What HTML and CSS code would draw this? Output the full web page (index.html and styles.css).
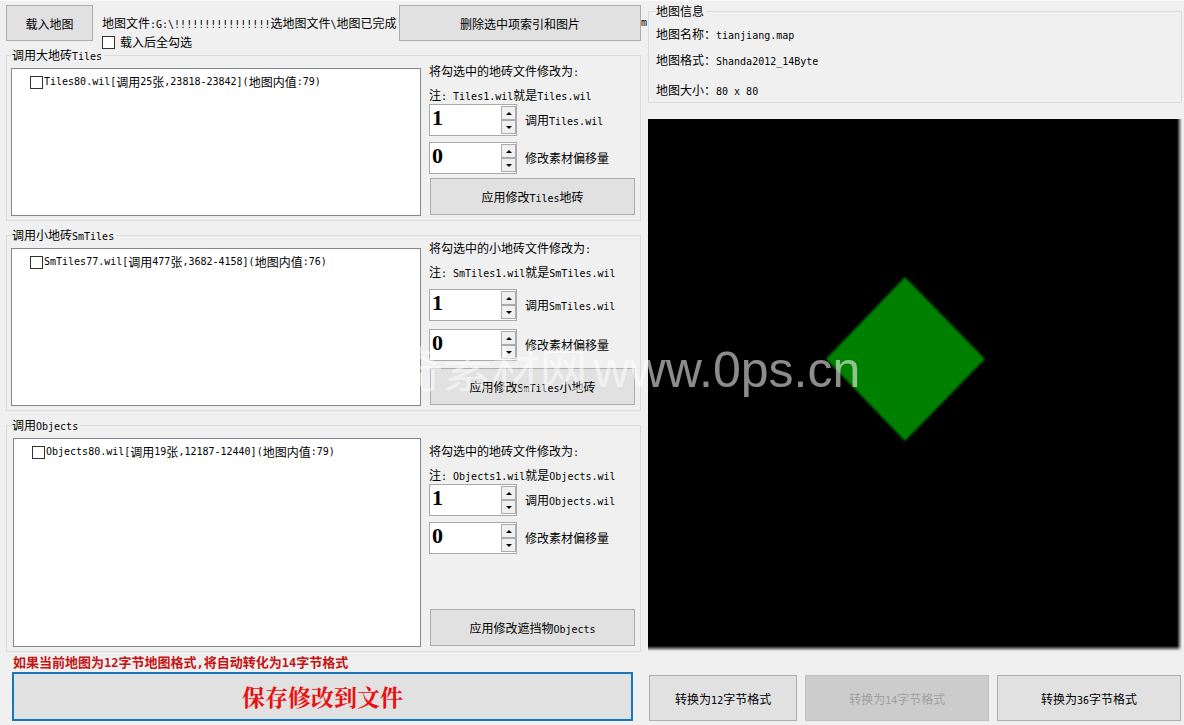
FILE: index.html
```html
<!DOCTYPE html>
<html lang="zh-CN">
<head>
    <meta charset="UTF-8">
    <meta name="viewport" content="width=device-width, initial-scale=1.0">
    <title>地图索引修改工具</title>
    <link rel="stylesheet" href="styles.css">
</head>
<body>
    <div class="window">
        <div class="left">
            <div class="toolbar">
                <button type="button" class="btn btn-load">载入地图</button>
                <div class="toolbar-text">
                    <p class="file-path">地图文件<span class="en">:G:\!!!!!!!!!!!!!!!!</span>选地图文件<span class="en">\</span>地图已完成<span class="en">'</span></p>
                    <label class="check"><input type="checkbox">载入后全勾选</label>
                </div>
                <button type="button" class="btn btn-delete">删除选中项索引和图片</button>
                <span class="path-end en">m</span>
            </div>

            <fieldset class="group">
                <legend>调用大地砖<span class="en">Tiles</span></legend>
                <div class="group-body tiles">
                    <div class="list">
                        <label class="list-item"><input type="checkbox"><span class="en">Tiles80.wil[</span>调用<span class="en">25</span>张<span class="en">,23818-23842](</span>地图内值<span class="en">:79)</span></label>
                    </div>
                    <div class="controls">
                        <p>将勾选中的地砖文件修改为<span class="en">:</span></p>
                        <p>注<span class="en">: Tiles1.wil</span>就是<span class="en">Tiles.wil</span></p>
                        <div class="row">
                            <div class="spin">
                                <input type="text" id="tiles-file" value="1">
                                <div class="spin-btns"><button type="button" aria-label="加"></button><button type="button" aria-label="减" class="down"></button></div>
                            </div>
                            <label for="tiles-file">调用<span class="en">Tiles.wil</span></label>
                        </div>
                        <div class="row">
                            <div class="spin">
                                <input type="text" id="tiles-offset" value="0">
                                <div class="spin-btns"><button type="button" aria-label="加"></button><button type="button" aria-label="减" class="down"></button></div>
                            </div>
                            <label for="tiles-offset">修改素材偏移量</label>
                        </div>
                        <button type="button" class="btn btn-apply">应用修改<span class="en">Tiles</span>地砖</button>
                    </div>
                </div>
            </fieldset>

            <fieldset class="group">
                <legend>调用小地砖<span class="en">SmTiles</span></legend>
                <div class="group-body smtiles">
                    <div class="list">
                        <label class="list-item"><input type="checkbox"><span class="en">SmTiles77.wil[</span>调用<span class="en">477</span>张<span class="en">,3682-4158](</span>地图内值<span class="en">:76)</span></label>
                    </div>
                    <div class="controls">
                        <p>将勾选中的小地砖文件修改为<span class="en">:</span></p>
                        <p>注<span class="en">: SmTiles1.wil</span>就是<span class="en">SmTiles.wil</span></p>
                        <div class="row">
                            <div class="spin">
                                <input type="text" id="smtiles-file" value="1">
                                <div class="spin-btns"><button type="button" aria-label="加"></button><button type="button" aria-label="减" class="down"></button></div>
                            </div>
                            <label for="smtiles-file">调用<span class="en">SmTiles.wil</span></label>
                        </div>
                        <div class="row">
                            <div class="spin">
                                <input type="text" id="smtiles-offset" value="0">
                                <div class="spin-btns"><button type="button" aria-label="加"></button><button type="button" aria-label="减" class="down"></button></div>
                            </div>
                            <label for="smtiles-offset">修改素材偏移量</label>
                        </div>
                        <button type="button" class="btn btn-apply">应用修改<span class="en">SmTiles</span>小地砖</button>
                    </div>
                </div>
            </fieldset>

            <fieldset class="group">
                <legend>调用<span class="en">Objects</span></legend>
                <div class="group-body objects">
                    <div class="list">
                        <label class="list-item"><input type="checkbox"><span class="en">Objects80.wil[</span>调用<span class="en">19</span>张<span class="en">,12187-12440](</span>地图内值<span class="en">:79)</span></label>
                    </div>
                    <div class="controls">
                        <p>将勾选中的地砖文件修改为<span class="en">:</span></p>
                        <p>注<span class="en">: Objects1.wil</span>就是<span class="en">Objects.wil</span></p>
                        <div class="row">
                            <div class="spin">
                                <input type="text" id="objects-file" value="1">
                                <div class="spin-btns"><button type="button" aria-label="加"></button><button type="button" aria-label="减" class="down"></button></div>
                            </div>
                            <label for="objects-file">调用<span class="en">Objects.wil</span></label>
                        </div>
                        <div class="row">
                            <div class="spin">
                                <input type="text" id="objects-offset" value="0">
                                <div class="spin-btns"><button type="button" aria-label="加"></button><button type="button" aria-label="减" class="down"></button></div>
                            </div>
                            <label for="objects-offset">修改素材偏移量</label>
                        </div>
                        <button type="button" class="btn btn-apply">应用修改遮挡物<span class="en">Objects</span></button>
                    </div>
                </div>
            </fieldset>

            <p class="warning">如果当前地图为<span class="en">12</span>字节地图格式<span class="en">,</span>将自动转化为<span class="en">14</span>字节格式</p>
            <button type="button" class="btn btn-save">保存修改到文件</button>
        </div>

        <div class="right">
            <fieldset class="info">
                <legend>地图信息</legend>
                <p>地图名称：<span class="en">tianjiang.map</span></p>
                <p>地图格式：<span class="en">Shanda2012_14Byte</span></p>
                <p class="size">地图大小：<span class="en">80 x 80</span></p>
            </fieldset>

            <div class="map">
                <svg viewBox="0 0 534 532" preserveAspectRatio="xMidYMid meet">
                    <filter id="soft"><feGaussianBlur stdDeviation="1"/></filter>
                    <polygon points="257,158 337,240 257,322 178,240" fill="#008000" filter="url(#soft)"/>
                </svg>
            </div>

            <div class="convert">
                <button type="button" class="btn btn-12">转换为<span class="en">12</span>字节格式</button>
                <button type="button" class="btn" disabled>转换为<span class="en">14</span>字节格式</button>
                <button type="button" class="btn">转换为<span class="en">36</span>字节格式</button>
            </div>
        </div>

        <div class="watermark"><span>传奇素材网</span>www.0ps.cn</div>
    </div>

    <script>
        // up / down buttons of the number boxes
        document.querySelectorAll('.spin').forEach(spin => {
            const input = spin.querySelector('input');
            spin.querySelectorAll('button').forEach(btn => {
                btn.addEventListener('click', () => {
                    const step = btn.classList.contains('down') ? -1 : 1;
                    input.value = (parseInt(input.value) || 0) + step;
                });
            });
        });
    </script>
</body>
</html>
```

FILE: styles.css
```css
* {
    margin: 0;
    padding: 0;
    box-sizing: border-box;
}

body {
    background-color: #f0f0f0;
    color: #000;
    font-family: 'Noto Sans CJK SC', sans-serif;
    font-size: 12px;
    line-height: 14px;
}

button, input {
    font-family: inherit;
    font-size: inherit;
    color: inherit;
}

/* latin text is half the width of the chinese text */
.en {
    font-family: 'DejaVu Sans Mono', monospace;
    font-size: 10px;
    line-height: 0;
}

.window {
    position: relative;
    display: grid;
    grid-template-columns: 635fr 534fr;
    gap: 7px;
    min-width: 980px;
    min-height: 100vh;
    padding: 4px 2px 4px 6px;
    box-shadow: inset 0 1px #fafafa;
}

.left, .right {
    display: flex;
    flex-direction: column;
    min-width: 0;
}

.btn {
    background-color: #e1e1e1;
    border: 1px solid #adadad;
    white-space: nowrap;
}

.btn:hover {
    background-color: #e5f1fb;
    border-color: #0078d7;
}

.btn:disabled {
    background-color: #ccc;
    border-color: #bfbfbf;
    color: #a0a0a0;
}

/* toolbar */
.toolbar {
    display: flex;
    align-items: flex-start;
    height: 44px;
    padding-top: 1px;
    margin-right: -7px;
}

.btn-load {
    width: 87px;
    height: 36px;
    margin-right: 9px;
}

.toolbar-text {
    flex: 1;
    min-width: 0;
    padding-top: 9px;
}

.toolbar-text .file-path {
    line-height: 18px;
    white-space: nowrap;
    overflow: hidden;
}

.check {
    display: flex;
    align-items: center;
    gap: 5px;
    line-height: 20px;
}

input[type="checkbox"] {
    appearance: none;
    flex: none;
    width: 13px;
    height: 13px;
    background-color: #fff;
    border: 1px solid #333;
}

input[type="checkbox"]:checked {
    background-color: #333;
    box-shadow: inset 0 0 0 2px #fff;
}

.btn-delete {
    width: 242px;
    height: 36px;
}

.path-end {
    width: 7px;
    padding-top: 18px;
}

/* groups */
.group, .info {
    border: 1px solid #dcdcdc;
    min-width: 0;
}

.group {
    padding: 6px 5px 4px 4px;
    margin-bottom: 7px;
}

legend {
    margin-left: 1px;
    padding-right: 2px;
    line-height: 14px;
}

.group-body {
    display: flex;
    gap: 8px;
}

.tiles {
    height: 148px;
}

.smtiles {
    height: 158px;
}

.objects {
    height: 209px;
    padding-left: 2px;
}

.list {
    flex: 1;
    min-width: 0;
    padding: 6px 4px 4px 18px;
    background-color: #fff;
    border: 1px solid #828790;
}

.list-item {
    display: flex;
    align-items: center;
    white-space: nowrap;
}

.list-item input {
    margin-right: 1px;
}

.controls {
    display: flex;
    flex-direction: column;
    width: 206px;
    padding-bottom: 1px;
    white-space: nowrap;
}

.controls p {
    margin-bottom: 10px;
}

.controls p + p {
    margin-bottom: 2px;
}

.tiles .controls {
    margin-top: -4px;
}

.smtiles .controls {
    margin-top: -7px;
}

.objects .controls {
    margin-top: 6px;
}

.smtiles .controls p + p {
    margin-bottom: 10px;
}

.row {
    display: flex;
    align-items: center;
    gap: 8px;
    margin-bottom: 6px;
}

.smtiles .row {
    margin-bottom: 8px;
}

.tiles .row:nth-of-type(2), .smtiles .row:nth-of-type(2) {
    margin-bottom: 0;
}

.spin {
    display: flex;
    width: 88px;
    height: 32px;
    padding: 1px 0;
    background-color: #fff;
    border: 1px solid #aaa;
}

.spin input {
    flex: 1;
    min-width: 0;
    padding: 0 2px 4px;
    background: none;
    border: none;
    outline: none;
    font-family: 'Liberation Serif', serif;
    font-size: 22px;
    font-weight: bold;
}

.spin-btns {
    display: flex;
    flex-direction: column;
    width: 15px;
}

.spin-btns button {
    display: flex;
    flex: 1;
    align-items: center;
    justify-content: center;
    background-color: #f0f0f0;
    border: 1px solid #acacac;
}

.spin-btns button::before {
    content: '';
    border: 3px solid transparent;
    border-top: none;
    border-bottom-color: #000;
}

.spin-btns .down::before {
    border: 3px solid transparent;
    border-bottom: none;
    border-top-color: #000;
}

.btn-apply {
    height: 37px;
    margin-top: auto;
    margin-left: 1px;
}

.warning {
    margin: -4px 0 3px 7px;
    color: #c41414;
    font-size: 13px;
    font-weight: bold;
}

.warning .en {
    font-size: 12px;
}

.btn-save {
    height: 49px;
    margin: 0 8px 0 6px;
    border: 2px solid #1c75b8;
    box-shadow: inset 0 0 0 1px #cfe8fa;
    color: #e81010;
    font-family: 'Noto Serif CJK SC', 'Noto Sans CJK SC', serif;
    font-size: 23px;
    font-weight: bold;
}

/* map info */
.info {
    height: 99px;
    padding: 9px 7px 5px;
}

.info legend {
    margin-left: 0;
}

.info p {
    margin-bottom: 12px;
}

.info .size {
    margin: 16px 0 0;
}

.map {
    flex: 1;
    min-height: 0;
    margin: 16px 0 24px;
    background: linear-gradient(to left, #f0f0f0, transparent 5px),
                linear-gradient(to top, #f0f0f0, transparent 5px),
                #000;
}

.map svg {
    display: block;
    width: 100%;
    height: 100%;
}

.convert {
    display: flex;
    gap: 8px;
    padding: 0 1px;
}

.convert .btn {
    flex: 184;
    height: 46px;
}

.convert .btn-12 {
    flex: 148;
}

.watermark {
    position: absolute;
    top: 51%;
    left: 51%;
    transform: translate(-50%, -50%);
    color: rgba(255, 255, 255, 0.55);
    font-family: 'Liberation Sans', 'Noto Sans CJK SC', sans-serif;
    font-size: 50px;
    line-height: 60px;
    white-space: nowrap;
    pointer-events: none;
}

.watermark span {
    margin-right: 6px;
    font-size: 48px;
}
```
